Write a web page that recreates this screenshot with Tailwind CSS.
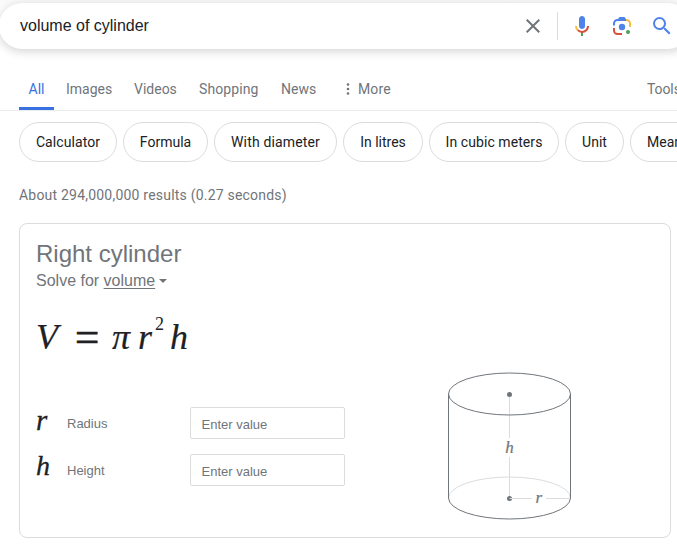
<!DOCTYPE html>
<html lang="en">
<head>
<meta charset="utf-8">
<title>volume of cylinder</title>
<script src="https://cdn.jsdelivr.net/npm/@tailwindcss/browser@4"></script>
</head>
<body class="w-[677px] h-[546px] overflow-hidden bg-white font-['Roboto',sans-serif] text-[14px] leading-5 text-[#70757a]">
<header class="h-[70px] pt-[3px] overflow-hidden bg-linear-to-b from-[#fafafa] to-white to-20%">
  <div class="-ml-px w-[692px] h-[46px] rounded-full bg-white shadow-[0_2px_8px_1px_rgba(64,60,67,0.2)] flex items-center pl-[21px]">
    <span class="w-[501px] font-['Liberation_Sans',sans-serif] text-[16px] leading-6 text-[#202124]">volume of cylinder</span>
    <svg class="w-6 h-6 shrink-0" viewBox="0 0 24 24" fill="#70757a"><path d="M19 6.41L17.59 5 12 10.59 6.41 5 5 6.41 10.59 12 5 17.59 6.41 19 12 13.41 17.59 19 19 17.59 13.41 12z"/></svg>
    <div class="ml-3 w-px h-7 bg-[#dadce0] shrink-0"></div>
    <svg class="ml-3 w-6 h-6 shrink-0" viewBox="0 0 24 24"><path fill="#4f83ea" d="M12 15c1.66 0 3-1.31 3-2.97V4.99C15 3.34 13.66 2 12 2S9 3.34 9 4.99v7.04C9 13.69 10.34 15 12 15z"/><path fill="#4c9f57" d="M11 18.08h2V22h-2z"/><path fill="#f2bf42" d="M7.05 16.87A6.97 6.97 0 0 1 5 12h2c0 1.37.56 2.59 1.44 3.47z"/><path fill="#d8503f" d="M12 16.93a4.97 4.97 0 0 1-3.54-1.47l-1.41 1.41A7 7 0 0 0 12 19c3.87 0 7-3.12 7-7h-2a5 5 0 0 1-5 4.93z"/></svg>
    <svg class="ml-4 w-6 h-6 shrink-0" viewBox="0 0 24 24" fill="none" stroke-width="2"><path stroke="#4f83ea" d="M4 11.5V9.500A3.500 3.500 0 0 1 7.500 6H9"/><path fill="#4f83ea" d="M8 5l1.500-2h5L16 5v2H8z"/><path stroke="#f2bf42" d="M16 6h.500A3.500 3.500 0 0 1 20 9.500V13"/><path stroke="#d8503f" d="M4 14v2.500A3.500 3.500 0 0 0 7.500 20H12"/><circle cx="12" cy="13" r="3.200" fill="#4f83ea"/><circle cx="18" cy="18" r="2" fill="#4c9f57"/></svg>
    <svg class="ml-4 w-6 h-6 shrink-0" viewBox="0 0 24 24" fill="#4f83ea"><path d="M15.5 14h-.79l-.28-.27A6.471 6.471 0 0 0 16 9.5 6.5 6.5 0 1 0 9.500 16c1.610 0 3.090-.59 4.230-1.570l.27.28v.79l5 4.990L20.490 19zm-6 0C7.010 14 5 11.990 5 9.500S7.010 5 9.500 5 14 7.010 14 9.500 11.990 14 9.500 14z"/></svg>
  </div>
</header>
<nav class="h-[41px] pl-[19px] flex items-start border-b border-[#ebebeb] whitespace-nowrap overflow-hidden">
  <div class="w-[35px] h-10 pt-[9px] border-b-3 border-[#3871e0] text-[#3871e0] text-center shrink-0">All</div>
  <div class="pt-[9px] ml-3 w-[68px] shrink-0">Images</div>
  <div class="pt-[9px] w-[65px] shrink-0">Videos</div>
  <div class="pt-[9px] w-[82px] tracking-[0.1px] shrink-0">Shopping</div>
  <div class="pt-[9px] w-[60px] shrink-0">News</div>
  <svg class="mt-[11px] w-[17px] h-4 shrink-0" viewBox="0 0 17 16" fill="#70757a"><circle cx="7" cy="3.500" r="1.300"/><circle cx="7" cy="8" r="1.300"/><circle cx="7" cy="12.500" r="1.300"/></svg>
  <div class="pt-[9px] w-[289px] tracking-[0.15px] shrink-0">More</div>
  <div class="pt-[9px] shrink-0 tracking-[-0.1px]">Tools</div>
</nav>
<div class="h-[51px] pt-[11px] pl-[19px] flex gap-[6px] text-[#202124] whitespace-nowrap overflow-hidden">
  <div class="w-[98px] h-10 shrink-0 rounded-full border border-[#dadce0] flex items-center justify-center tracking-[0.08px]">Calculator</div>
  <div class="w-[85px] h-10 shrink-0 rounded-full border border-[#dadce0] flex items-center justify-center">Formula</div>
  <div class="w-[123px] h-10 shrink-0 rounded-full border border-[#dadce0] flex items-center justify-center tracking-[0.15px]">With diameter</div>
  <div class="w-[80px] h-10 shrink-0 rounded-full border border-[#dadce0] flex items-center justify-center">In litres</div>
  <div class="w-[130px] h-10 shrink-0 rounded-full border border-[#dadce0] flex items-center justify-center tracking-[0.08px]">In cubic meters</div>
  <div class="w-[59px] h-10 shrink-0 rounded-full border border-[#dadce0] flex items-center justify-center">Unit</div>
  <div class="w-[98px] h-10 shrink-0 rounded-full border border-[#dadce0] flex items-center pl-4">Meaning</div>
</div>
<div class="h-[61px] pt-[23px] pl-[19px] tracking-[0.21px]">About 294,000,000 results (0.27 seconds)</div>
<main class="ml-[19px] w-[652px] h-[315px] border border-[#dadce0] rounded-lg pl-4 font-['Liberation_Sans',sans-serif] flex">
  <section class="w-[392px] pt-[14px]">
    <h1 class="text-[24px] leading-8">Right cylinder</h1>
    <div class="flex items-center text-[16px] leading-[22px]"><span>Solve for <span class="underline decoration-1 underline-offset-2">volume</span></span><svg class="ml-1 w-2 h-1" viewBox="0 0 8 4" fill="#70757a"><path d="M0 0h8L4 4z"/></svg></div>
    <div class="mt-[21px] h-11 flex items-baseline font-['Liberation_Serif',serif] text-[36px] leading-[44px] text-[#202124] [-webkit-text-stroke:0.2px_#202124]">
      <i class="w-[39px]">V</i><span class="w-[37px] text-[43px] relative top-0.5 [-webkit-text-stroke:0.7px_#202124]">=</span><i class="w-[26px]">π</i><i class="w-[17px]">r</i><span class="w-[15px] text-[18px] relative -top-[19px] [-webkit-text-stroke:0]">2</span><i>h</i>
    </div>
    <div class="mt-[50px] h-8 flex items-center text-[13px]">
      <i class="w-[31px] pb-[7px] font-['Liberation_Serif',serif] text-[29px] leading-8 text-[#202124] [-webkit-text-stroke:0.3px_#202124]">r</i><label class="w-[123px] pt-px">Radius</label>
      <div class="w-[155px] h-8 border border-[#dadce0] rounded-[2px] pl-[10.5px] pt-[2px] leading-[30px]">Enter value</div>
    </div>
    <div class="mt-[15px] h-8 flex items-center text-[13px]">
      <i class="w-[31px] pb-[9px] font-['Liberation_Serif',serif] text-[28px] leading-8 text-[#202124] [-webkit-text-stroke:0.3px_#202124]">h</i><label class="w-[123px] pt-px">Height</label>
      <div class="w-[155px] h-8 border border-[#dadce0] rounded-[2px] pl-[10.5px] pt-[2px] leading-[30px]">Enter value</div>
    </div>
  </section>
  <svg class="mt-[136px] ml-0.5 w-[160px] h-[170px]" viewBox="430 360 160 170" fill="none" stroke="#70757a" stroke-width="1">
    <path stroke="#dadce0" d="M448.500 498a61 21 0 0 1 122 0M509.500 394v44M509.500 457v41M510 498.500h22M546 498.500h24"/>
    <ellipse cx="509.500" cy="394" rx="61" ry="21"/>
    <path d="M448.500 394v104a61 21 0 0 0 122 0V394"/>
    <circle cx="509.500" cy="394.500" r="2.500" fill="#70757a" stroke="none"/>
    <circle cx="509.500" cy="498.500" r="2.500" fill="#70757a" stroke="none"/>
    <path stroke="#dadce0" d="M509.500 498.500h4"/>
    <g fill="#70757a" stroke="#70757a" stroke-width="0.200" font-family="Liberation Serif, serif" font-style="italic" font-size="17"><text x="505.300" y="453">h</text><text x="535.500" y="503">r</text></g>
  </svg>
</main>
</body>
</html>
